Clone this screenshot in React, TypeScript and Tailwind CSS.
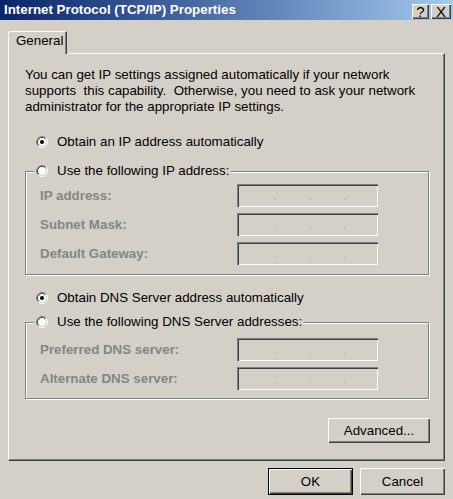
import React from "react";

const Radio = ({ checked = false }: { checked?: boolean }) => (
  <svg width="12" height="12" viewBox="0 0 12 12" className="shrink-0">
    <circle cx="6" cy="6" r="4.2" fill="#fff" />
    <path d="M2.11 9.89A5.5 5.5 0 0 1 9.89 2.11" stroke="#808080" fill="none" />
    <path d="M9.89 2.11A5.5 5.5 0 0 1 2.11 9.89" stroke="#fff" fill="none" />
    <path d="M2.82 9.18A4.5 4.5 0 0 1 9.18 2.82" stroke="#404040" fill="none" />
    <path d="M9.18 2.82A4.5 4.5 0 0 1 2.82 9.18" stroke="#d4d0c8" fill="none" />
    {checked && <circle cx="6" cy="6" r="2" fill="#000" />}
  </svg>
);

const IpField = () => (
  <div className="flex h-[23px] w-[141px] items-start gap-[33px] pl-[37px] pt-[15px] shadow-[inset_1px_1px_0_#808080,inset_2px_2px_0_#404040,inset_-1px_-1px_0_#fff,inset_-2px_-2px_0_#d4d0c8]">
    <span className="h-[1px] w-[2px] bg-[#b0b0b0]" />
    <span className="h-[1px] w-[2px] bg-[#b0b0b0]" />
    <span className="h-[1px] w-[2px] bg-[#b0b0b0]" />
  </div>
);

const FieldRow = ({ label }: { label: string }) => (
  <div className="flex items-center">
    <span className="w-[197px] font-bold text-[#858585]">{label}</span>
    <IpField />
  </div>
);

const btnShadow =
  "shadow-[inset_1px_1px_0_#fff,inset_-1px_-1px_0_#404040,inset_-2px_-2px_0_#808080]";

export default function App() {
  return (
    <div className="h-[499px] w-[453px] overflow-hidden bg-[#d4d0c8] font-['Liberation_Sans',Arial,sans-serif] text-[13.33px] leading-[16px] text-black">
      {/* Title bar */}
      <div className="flex h-[20px] items-start bg-linear-to-r from-[#0a246a] to-[#a6caf0] pr-[2px]">
        <span className="pl-[4px] text-[13.33px] font-bold leading-[20px] text-white">
          Internet Protocol (TCP/IP) Properties
        </span>
        <div className="ml-auto mt-[4px] flex gap-[2px]">
          <div
            className={`flex h-[15px] w-[17px] items-center justify-center bg-[#d4d0c8] text-[15px] leading-none ${btnShadow}`}
          >
            ?
          </div>
          <div
            className={`flex h-[15px] w-[20px] items-center justify-center bg-[#d4d0c8] text-[15px] leading-none ${btnShadow}`}
          >
            X
          </div>
        </div>
      </div>

      <div className="pt-[11px]">
        {/* Tab */}
        <div className="relative z-10 -mb-[1px] ml-[8px] h-[23px] w-[59px] rounded-tl-[3px] border-l border-r border-t border-l-white border-r-[#404040] border-t-white bg-[#d4d0c8] pl-[7px] pt-[1px] shadow-[inset_-1px_0_0_#808080]">
          General
        </div>

        {/* Panel */}
        <div className="ml-[8px] h-[408px] w-[437px] border-b border-l border-r border-t border-b-[#404040] border-l-white border-r-[#404040] border-t-white pl-[16px] pt-[13px] shadow-[inset_-1px_-1px_0_#808080]">
          <div className="whitespace-pre">
            <div>You can get IP settings assigned automatically if your network</div>
            <div>supports  this capability.  Otherwise, you need to ask your network</div>
            <div>administrator for the appropriate IP settings.</div>
          </div>

          <div className="ml-[11px] mt-[19px] flex h-[16px] items-center gap-[9px]">
            <Radio checked />
            <span>Obtain an IP address automatically</span>
          </div>

          <div className="mt-[21px] w-[404px] border border-[#808080] pb-[9px] shadow-[inset_1px_1px_0_#fff,1px_1px_0_#fff]">
            <div className="-mt-[9px] ml-[8px] flex h-[16px] w-fit items-center gap-[9px] bg-[#d4d0c8] px-[2px]">
              <Radio />
              <span>Use the following IP address:</span>
            </div>
            <div className="mt-[5px] flex flex-col gap-[6px] pl-[14px]">
              <FieldRow label="IP address:" />
              <FieldRow label="Subnet Mask:" />
              <FieldRow label="Default Gateway:" />
            </div>
          </div>

          <div className="ml-[11px] mt-[15px] flex h-[16px] items-center gap-[9px]">
            <Radio checked />
            <span>Obtain DNS Server address automatically</span>
          </div>

          <div className="mt-[16px] w-[404px] border border-[#808080] pb-[8px] shadow-[inset_1px_1px_0_#fff,1px_1px_0_#fff]">
            <div className="-mt-[9px] ml-[8px] flex h-[16px] w-fit items-center gap-[9px] bg-[#d4d0c8] px-[2px]">
              <Radio />
              <span>Use the following DNS Server addresses:</span>
            </div>
            <div className="mt-[8px] flex flex-col gap-[6px] pl-[14px]">
              <FieldRow label="Preferred DNS server:" />
              <FieldRow label="Alternate DNS server:" />
            </div>
          </div>

          <div className="mt-[19px] flex w-[405px] justify-end">
            <div
              className={`flex h-[25px] w-[102px] items-center justify-center bg-[#d4d0c8] ${btnShadow}`}
            >
              Advanced...
            </div>
          </div>
        </div>

        {/* Bottom buttons */}
        <div className="mt-[7px] flex justify-end gap-[7px] pr-[8px]">
          <div className="h-[27px] w-[85px] border border-black bg-[#d4d0c8]">
            <div
              className={`flex h-full w-full items-center justify-center ${btnShadow}`}
            >
              OK
            </div>
          </div>
          <div
            className={`flex h-[27px] w-[85px] items-center justify-center bg-[#d4d0c8] ${btnShadow}`}
          >
            Cancel
          </div>
        </div>
      </div>
    </div>
  );
}
